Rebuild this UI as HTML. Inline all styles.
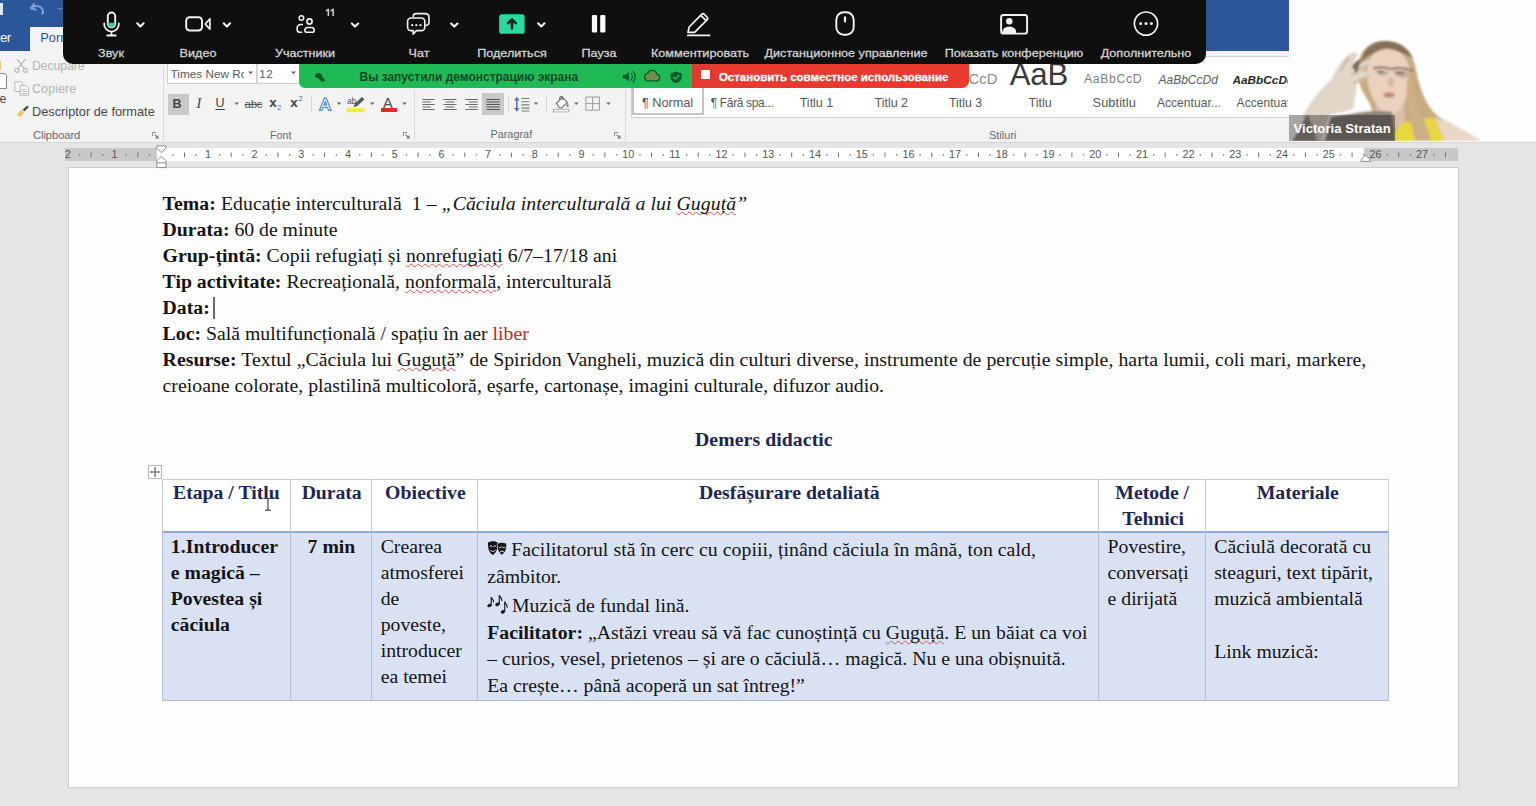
<!DOCTYPE html>
<html lang="ro">
<head>
<meta charset="utf-8">
<title>Document Word – Zoom</title>
<style>
*{box-sizing:border-box;margin:0;padding:0}
html,body{width:1536px;height:806px;overflow:hidden;background:#e5e4e6}
body{position:relative;font-family:"Liberation Sans","DejaVu Sans",sans-serif;color:#444}
.abs{position:absolute}
svg{position:absolute;overflow:visible}
/* ---------- Word chrome ---------- */
#titlebar{left:0;top:0;width:1289px;height:51px;background:#2a569a}
#tab-home{left:30px;top:27px;width:60px;height:24px;background:#f3f3f3;color:#2b579a;font-size:13px;line-height:24px;padding-left:10px}
#tab-prev{left:0;top:27px;width:30px;height:24px;color:#fff;font-size:13px;line-height:24px}
#ribbon{left:0;top:51px;width:1536px;height:92px;background:#f3f3f3;border-bottom:1px solid #d6d6d6}
#rulerbar{left:0;top:143px;width:1536px;height:25px;background:#e5e4e6}
.rb{position:absolute;font-size:12.5px;color:#444;white-space:nowrap;line-height:16px}
.grp{position:absolute;font-size:11.5px;color:#666;white-space:nowrap;line-height:14px}
.sep{position:absolute;width:1px;background:#dadada}
.rt2{position:absolute;white-space:nowrap;line-height:20px;height:20px}
/* ---------- Page ---------- */
#page{left:68px;top:167px;width:1390.500px;height:620.500px;background:#fefdfe;border:1px solid #cdcdcd}
.t{position:absolute;white-space:nowrap;font-family:"Liberation Serif","DejaVu Serif",serif;font-size:19.75px;line-height:26px;height:26px;color:#141414}
.t b{font-weight:bold}
.sq{text-decoration:underline wavy #d9534f;text-decoration-thickness:1px;text-underline-offset:1px;text-decoration-skip-ink:none}
.nv{color:#1d2654}
.red{color:#c0271e}
/* table */
.cell{position:absolute;border:1px solid #b9c5e3}
.vl{top:479px;width:1px;height:221.500px;background:linear-gradient(#c4c9dc 0,#c4c9dc 52px,#b3c0e2 52px,#b3c0e2 100%)}
/* ---------- Zoom toolbar ---------- */
#ztb{left:63px;top:0;width:1143px;height:64px;background:#0f0f0f;border-radius:0 0 10px 10px}
.zl{position:absolute;top:45.400px;font-size:11.400px;line-height:16px;color:#d2d2d2;white-space:nowrap;transform:translateX(-50%) scaleX(1.105);-webkit-text-stroke:.3px #d2d2d2}
.zn{position:absolute;font-size:46px;line-height:48px;height:48px;color:#dcdcdc;white-space:nowrap;letter-spacing:-3px;transform:scale(.25);transform-origin:0 0;-webkit-text-stroke:1.400px #dcdcdc}
#gbar{left:298.500px;top:64px;width:395px;height:24.300px;background:#1fba56;border-radius:0 0 0 6px}
#rbar{left:692px;top:64px;width:276.500px;height:23.500px;background:#e8392e;border-radius:0 0 7px 0}
.gt{position:absolute;font-size:11.960px;font-weight:bold;line-height:16px;color:#0c4a24;white-space:nowrap}
.rt{position:absolute;font-size:11.490px;font-weight:bold;line-height:16px;color:#fff;white-space:nowrap;-webkit-text-stroke:.3px #fff}
/* ---------- Webcam ---------- */
#cam{left:1289px;top:0;width:247px;height:140.500px;background:#fefefe;overflow:hidden}
</style>
</head>
<body>
<div id="titlebar" class="abs"></div>
<div id="tab-home" class="abs"></div>
<div id="ribbon" class="abs"></div>
<!-- undo arrow + quick access remnants on title bar -->
<svg style="left:0;top:0" width="70" height="26" viewBox="0 0 70 26"><path d="M34 4l-3.200 4.200 5 1.600M31.200 8c3-2.600 8-2.800 10.600.4 1.600 2 1.600 4 .6 5.600" fill="none" stroke="#7f9fd6" stroke-width="2" stroke-linecap="round" stroke-linejoin="round"/><path d="M57.600 8.700h6" stroke="#5a7fc0" stroke-width="1.600"/><rect x="0" y="3" width="3" height="12" fill="#dfe7f5"/></svg>
<!-- paste icon remnants -->
<div class="abs" style="left:0;top:61px;width:1.200px;height:9px;background:#efc27a"></div>
<div class="abs" style="left:-6px;top:73px;width:13px;height:15.500px;background:#fff;border:1px solid #8a8a8a;border-radius:0 3px 0 0"></div>
<!-- clipboard icons -->
<svg style="left:14px;top:57px" width="16" height="62" viewBox="14 57 16 62" fill="none" stroke-linecap="round" stroke-linejoin="round">
<g stroke="#b9b9b9" stroke-width="1.200"><path d="M17.200 59.400l7.200 9.200M25.200 59.400l-7.200 9.200"/><circle cx="17" cy="70.300" r="2"/><circle cx="25.400" cy="70.300" r="2"/></g>
<g stroke="#b9b9b9" stroke-width="1" fill="#f7f7f7"><path d="M15.200 81.800h5.600l2 2v7.600h-7.600z"/><path d="M20.400 85.400h5.800l2.400 2.400v7.400h-8.200z"/><path d="M22 89.500h4.600M22 91.500h4.600M22 93.500h4.600" stroke-width=".8"/></g>
<path d="M22.600 109.800l4.600-4.200 1.600 1.600-4.400 4.400z" fill="#4a4a4a"/>
<path d="M17 114.200c1.600-.6 2.600-2.600 4.400-4.400l3 3c-1.800 1.800-3.400 3.600-5 4.800z" fill="#f0c75e"/>
</svg>
<!-- group separators -->
<div class="sep" style="left:163px;top:66px;height:75px"></div>
<div class="sep" style="left:413.500px;top:90px;height:51px"></div>
<div class="sep" style="left:625px;top:90px;height:51px"></div>
<!-- dialog launchers -->
<svg style="left:152px;top:132px" width="7" height="6" viewBox="0 0 7 6"><path d="M.5 4V.5H4" fill="none" stroke="#8a8a8a"/><path d="M2.600 2.600L6 6V3.400M6 6H3.400" fill="none" stroke="#777" stroke-width="1.100"/></svg>
<svg style="left:402.500px;top:132px" width="7" height="6" viewBox="0 0 7 6"><path d="M.5 4V.5H4" fill="none" stroke="#8a8a8a"/><path d="M2.600 2.600L6 6V3.400M6 6H3.400" fill="none" stroke="#777" stroke-width="1.100"/></svg>
<svg style="left:614px;top:132px" width="7" height="6" viewBox="0 0 7 6"><path d="M.5 4V.5H4" fill="none" stroke="#8a8a8a"/><path d="M2.600 2.600L6 6V3.400M6 6H3.400" fill="none" stroke="#777" stroke-width="1.100"/></svg>
<!-- font name / size boxes -->
<div class="abs" style="left:167px;top:60px;width:89.500px;height:24px;background:#fff;border:1px solid #cfcfcf"></div>
<div class="abs" style="left:256.500px;top:60px;width:44px;height:24px;background:#fff;border:1px solid #cfcfcf;border-left:1px solid #dcdcdc"></div>
<svg style="left:248px;top:71px" width="50" height="4" viewBox="248 71 50 4"><path d="M248.200 71.400h5l-2.500 2.800zM291 71.400h5l-2.500 2.800z" fill="#666"/></svg>
<!-- B highlighted, justify highlighted -->
<div class="abs" style="left:167.500px;top:93.500px;width:21.300px;height:21.600px;background:#c9c9c9"></div>
<div class="abs" style="left:482.400px;top:93.200px;width:21.200px;height:22px;background:#c9c9c9"></div>
<div class="sep" style="left:310.500px;top:95.500px;height:16px;background:#d4d4d4"></div>
<div class="sep" style="left:507.500px;top:95.500px;height:16px;background:#d4d4d4"></div>
<div class="sep" style="left:546.300px;top:95.500px;height:16px;background:#d4d4d4"></div>
<div id="rulerbar" class="abs"></div>
<div id="page" class="abs"></div>
<!-- dropdown arrows row 2 -->
<svg style="left:230px;top:100px" width="390" height="8" viewBox="230 100 390 8"><g fill="#6a6a6a"><path d="M234.400 102.400h4.600l-2.300 2.600z"/><path d="M336.800 102.400h4.600l-2.300 2.600z"/><path d="M370 102.400h4.600l-2.300 2.600z"/><path d="M402.200 102.400h4.600l-2.300 2.600z"/><path d="M533.800 102.400h4.600l-2.300 2.600z"/><path d="M574 102.400h4.600l-2.300 2.600z"/><path d="M606.200 102.400h4.600l-2.300 2.600z"/></g></svg>
<!-- text effects A -->
<svg style="left:317px;top:96px" width="17" height="17" viewBox="317 96 17 17"><path d="M319.400 110.400l5-12.400h1.800l5 12.400h-2.600l-1.100-3h-4.500l-1.100 3zM324 105.200h2.600l-1.300-3.800z" fill="#f4f8ff" stroke="#5b8fd6" stroke-width="1.300" stroke-linejoin="round"/></svg>
<!-- highlighter -->
<svg style="left:345px;top:94px" width="22" height="20" viewBox="345 94 22 20"><rect x="346.200" y="108.200" width="18.600" height="4" rx="1.600" fill="#f2ee3a"/><path d="M353.400 107.200l1.400-3.600 7.200-6.600 2.400 2.400-7.200 6.600z" fill="#5a5a5a"/></svg>
<div class="rt2" style="left:347px;top:90.500px;font-size:8.500px;color:#555;letter-spacing:-.2px">ab</div>
<!-- font colour -->
<div class="rt2" style="left:383px;top:92.500px;font-size:14.500px;color:#4a4a4a">A</div>
<div class="abs" style="left:381px;top:108.200px;width:16px;height:4px;background:#e02a2a"></div>
<!-- align icons -->
<svg style="left:420px;top:96px" width="200" height="18" viewBox="420 96 200 18" fill="none" stroke="#6a6a6a" stroke-width="1.100">
<path d="M422.400 99.500h12.200M422.400 102h8.600M422.400 104.500h12.200M422.400 107h8.600M422.400 109.500h12.200"/>
<path d="M443.400 99.500h13.200M445.600 102h8.800M443.400 104.500h13.200M445.600 107h8.800M443.400 109.500h13.200"/>
<path d="M465.400 99.500h12.400M469 102h8.800M465.400 104.500h12.400M469 107h8.800M465.400 109.500h12.400"/>
<path d="M486.400 99.500h13.400M486.400 102h13.400M486.400 104.500h13.400M486.400 107h13.400M486.400 109.500h13.400" stroke="#555"/>
<!-- line spacing -->
<path d="M521.400 98.500h8M521.400 101.700h8M521.400 104.900h8M521.400 108.100h8M521.400 111h8" stroke="#7a7a7a"/>
<path d="M516.800 98v12.400" stroke="#4a6fb3" stroke-width="1.500"/><path d="M514 100.400l2.800-3.600 2.800 3.600zM514 108l2.800 3.600 2.800-3.600z" fill="#4a6fb3" stroke="none"/>
<!-- shading bucket -->
<path d="M556.400 103.400l6-6 5 5-5.600 5.400h-2.400z" fill="#fbfbfb" stroke="#666"/><path d="M560 99.800c-1-2.200.4-3.800 1.800-3.200 1.200.6 1.200 2 .8 3.200" stroke="#666"/><path d="M567.800 103.600c.8 1.400 1.200 2.200.6 3-.6.600-1.600.4-1.800-.6-.1-.8.500-1.500 1.200-2.400z" fill="#777" stroke="none"/>
<rect x="553.400" y="109.300" width="15.400" height="2.600" fill="#fff" stroke="#9a9a9a" stroke-width=".8"/>
<!-- borders -->
<path d="M585.800 97h13.600v13.200h-13.600zM592.600 97v13.200M585.800 103.600h13.600" stroke="#9a9a9a" stroke-width="1"/>
</svg>
<!-- styles gallery -->
<div class="abs" style="left:631px;top:56px;width:658px;height:61.500px;background:#fff;border-left:1px solid #d0d0d0;border-top:1px solid #d2d2d2;border-bottom:1px solid #cfcfcf"></div>
<div class="abs" style="left:632px;top:86px;width:72.400px;height:28.600px;border:2px solid #c4c4c4"></div>
<div id="ruler" class="abs" style="left:0;top:0">
<div class="abs" style="left:64.800px;top:148px;width:1393.600px;height:13px;background:#fff"></div>
<div class="abs" style="left:64.800px;top:148px;width:92.400px;height:13px;background:#c8c8c8"></div>
<div class="abs" style="left:1364.400px;top:148px;width:94px;height:13px;background:#c8c8c8"></div>
<svg style="left:0;top:143px" width="1536" height="26" viewBox="0 143 1536 26">
<path d="M91.1 152.500v4.600M137.8 152.500v4.600M184.5 152.500v4.600M231.2 152.500v4.600M277.9 152.500v4.600M324.6 152.500v4.600M371.4 152.500v4.600M418.1 152.500v4.600M464.8 152.500v4.600M511.4 152.500v4.600M558.2 152.500v4.600M604.9 152.500v4.600M651.5 152.500v4.600M698.2 152.500v4.600M745.0 152.500v4.600M791.7 152.500v4.600M838.4 152.500v4.600M885.0 152.500v4.600M931.8 152.500v4.600M978.5 152.500v4.600M1025.2 152.500v4.600M1071.9 152.500v4.600M1118.5 152.500v4.600M1165.2 152.500v4.600M1212.0 152.500v4.600M1258.7 152.500v4.600M1305.4 152.500v4.600M1352.1 152.500v4.600M1398.8 152.500v4.600M1445.5 152.500v4.600" stroke="#6f6f6f" stroke-width="1" fill="none"/>
<g fill="#6a6a6a"><rect x="78.9" y="154.200" width="1.300" height="1.300"/><rect x="102.2" y="154.200" width="1.300" height="1.300"/><rect x="125.6" y="154.200" width="1.300" height="1.300"/><rect x="148.9" y="154.200" width="1.300" height="1.300"/><rect x="172.3" y="154.200" width="1.300" height="1.300"/><rect x="195.6" y="154.200" width="1.300" height="1.300"/><rect x="219.0" y="154.200" width="1.300" height="1.300"/><rect x="242.3" y="154.200" width="1.300" height="1.300"/><rect x="265.7" y="154.200" width="1.300" height="1.300"/><rect x="289.0" y="154.200" width="1.300" height="1.300"/><rect x="312.4" y="154.200" width="1.300" height="1.300"/><rect x="335.7" y="154.200" width="1.300" height="1.300"/><rect x="359.1" y="154.200" width="1.300" height="1.300"/><rect x="382.4" y="154.200" width="1.300" height="1.300"/><rect x="405.8" y="154.200" width="1.300" height="1.300"/><rect x="429.1" y="154.200" width="1.300" height="1.300"/><rect x="452.5" y="154.200" width="1.300" height="1.300"/><rect x="475.8" y="154.200" width="1.300" height="1.300"/><rect x="499.2" y="154.200" width="1.300" height="1.300"/><rect x="522.5" y="154.200" width="1.300" height="1.300"/><rect x="545.9" y="154.200" width="1.300" height="1.300"/><rect x="569.2" y="154.200" width="1.300" height="1.300"/><rect x="592.6" y="154.200" width="1.300" height="1.300"/><rect x="615.9" y="154.200" width="1.300" height="1.300"/><rect x="639.3" y="154.200" width="1.300" height="1.300"/><rect x="662.6" y="154.200" width="1.300" height="1.300"/><rect x="686.0" y="154.200" width="1.300" height="1.300"/><rect x="709.3" y="154.200" width="1.300" height="1.300"/><rect x="732.7" y="154.200" width="1.300" height="1.300"/><rect x="756.0" y="154.200" width="1.300" height="1.300"/><rect x="779.4" y="154.200" width="1.300" height="1.300"/><rect x="802.7" y="154.200" width="1.300" height="1.300"/><rect x="826.1" y="154.200" width="1.300" height="1.300"/><rect x="849.4" y="154.200" width="1.300" height="1.300"/><rect x="872.8" y="154.200" width="1.300" height="1.300"/><rect x="896.1" y="154.200" width="1.300" height="1.300"/><rect x="919.5" y="154.200" width="1.300" height="1.300"/><rect x="942.8" y="154.200" width="1.300" height="1.300"/><rect x="966.2" y="154.200" width="1.300" height="1.300"/><rect x="989.5" y="154.200" width="1.300" height="1.300"/><rect x="1012.9" y="154.200" width="1.300" height="1.300"/><rect x="1036.2" y="154.200" width="1.300" height="1.300"/><rect x="1059.6" y="154.200" width="1.300" height="1.300"/><rect x="1082.9" y="154.200" width="1.300" height="1.300"/><rect x="1106.3" y="154.200" width="1.300" height="1.300"/><rect x="1129.6" y="154.200" width="1.300" height="1.300"/><rect x="1153.0" y="154.200" width="1.300" height="1.300"/><rect x="1176.3" y="154.200" width="1.300" height="1.300"/><rect x="1199.7" y="154.200" width="1.300" height="1.300"/><rect x="1223.0" y="154.200" width="1.300" height="1.300"/><rect x="1246.4" y="154.200" width="1.300" height="1.300"/><rect x="1269.7" y="154.200" width="1.300" height="1.300"/><rect x="1293.1" y="154.200" width="1.300" height="1.300"/><rect x="1316.4" y="154.200" width="1.300" height="1.300"/><rect x="1339.8" y="154.200" width="1.300" height="1.300"/><rect x="1363.1" y="154.200" width="1.300" height="1.300"/><rect x="1386.5" y="154.200" width="1.300" height="1.300"/><rect x="1409.8" y="154.200" width="1.300" height="1.300"/><rect x="1433.2" y="154.200" width="1.300" height="1.300"/></g>
<g font-family="Liberation Sans, DejaVu Sans, sans-serif" font-size="10.800" fill="#555" text-anchor="middle">
<text x="67.8" y="158.400">2</text>
<text x="114.5" y="158.400">1</text>
<text x="207.9" y="158.400">1</text>
<text x="254.6" y="158.400">2</text>
<text x="301.3" y="158.400">3</text>
<text x="348.0" y="158.400">4</text>
<text x="394.7" y="158.400">5</text>
<text x="441.4" y="158.400">6</text>
<text x="488.1" y="158.400">7</text>
<text x="534.8" y="158.400">8</text>
<text x="581.5" y="158.400">9</text>
<text x="628.2" y="158.400">10</text>
<text x="674.9" y="158.400">11</text>
<text x="721.6" y="158.400">12</text>
<text x="768.3" y="158.400">13</text>
<text x="815.0" y="158.400">14</text>
<text x="861.7" y="158.400">15</text>
<text x="908.4" y="158.400">16</text>
<text x="955.1" y="158.400">17</text>
<text x="1001.8" y="158.400">18</text>
<text x="1048.5" y="158.400">19</text>
<text x="1095.2" y="158.400">20</text>
<text x="1141.9" y="158.400">21</text>
<text x="1188.6" y="158.400">22</text>
<text x="1235.3" y="158.400">23</text>
<text x="1282.0" y="158.400">24</text>
<text x="1328.7" y="158.400">25</text>
<text x="1375.4" y="158.400">26</text>
<text x="1422.1" y="158.400">27</text>
</g>
<path d="M156.800 145.800h9.200v2.200l-4.600 4.600-4.600-4.600z" fill="#fdfdfd" stroke="#8a8a8a" stroke-width="1"/>
<path d="M156.800 167.600v-6.800l4.600-4.600 4.600 4.600v6.800zM156.800 162.800h9.200" fill="#fdfdfd" stroke="#8a8a8a" stroke-width="1"/>
<path d="M1361 161.400v-1.600l4.600-4.600 4.600 4.600v1.600z" fill="#fdfdfd" stroke="#8a8a8a" stroke-width="1"/>
</svg>
</div>
<div id="rtxt" class="abs" style="left:0;top:0">
<div class="rt2" style="left:32.0px;top:55.7px;font-size:12.42px;color:#b4b4b4;letter-spacing:-0.16px;">Decupare</div>
<div class="rt2" style="left:32.0px;top:78.7px;font-size:12.5px;color:#b4b4b4;letter-spacing:0.08px;">Copiere</div>
<div class="rt2" style="left:32.0px;top:101.6px;font-size:12.78px;color:#484848;">Descriptor de formate</div>
<div class="rt2" style="left:33.0px;top:124.5px;font-size:11.26px;color:#6a6a6a;letter-spacing:-0.10px;">Clipboard</div>
<div class="rt2" style="left:170.5px;top:64.2px;font-size:11.8px;color:#5a5a5a;width:73.6px;overflow:hidden;">Times New Roman</div>
<div class="rt2" style="left:259.2px;top:64.3px;font-size:11.59px;color:#5a5a5a;letter-spacing:0.50px;">12</div>
<div class="rt2" style="left:269.9px;top:124.5px;font-size:10.66px;color:#6a6a6a;letter-spacing:0.10px;">Font</div>
<div class="rt2" style="left:490.4px;top:124.0px;font-size:10.9px;color:#6a6a6a;">Paragraf</div>
<div class="rt2" style="left:642.1px;top:93.2px;font-size:12.75px;color:#5a5a5a;letter-spacing:-0.07px;">¶ Normal</div>
<div class="rt2" style="left:710.7px;top:93.4px;font-size:12.1px;color:#5a5a5a;letter-spacing:-0.38px;">¶ Fără spa...</div>
<div class="rt2" style="left:799.7px;top:93.2px;font-size:12.58px;color:#5a5a5a;letter-spacing:-0.03px;">Titlu 1</div>
<div class="rt2" style="left:874.5px;top:93.2px;font-size:12.58px;color:#5a5a5a;letter-spacing:-0.03px;">Titlu 2</div>
<div class="rt2" style="left:949.0px;top:93.3px;font-size:12.34px;color:#5a5a5a;letter-spacing:-0.02px;">Titlu 3</div>
<div class="rt2" style="left:1028.6px;top:93.2px;font-size:12.62px;color:#5a5a5a;letter-spacing:-0.05px;">Titlu</div>
<div class="rt2" style="left:1092.5px;top:93.2px;font-size:12.83px;color:#5a5a5a;letter-spacing:0.07px;">Subtitlu</div>
<div class="rt2" style="left:1156.9px;top:93.4px;font-size:12.1px;color:#5a5a5a;letter-spacing:0.01px;">Accentuar...</div>
<div class="rt2" style="left:1236.6px;top:93.4px;font-size:12.1px;color:#5a5a5a;width:51.6px;overflow:hidden;">Accentuat...</div>
<div class="rt2" style="left:988.9px;top:124.6px;font-size:11.0px;color:#6a6a6a;letter-spacing:0.02px;">Stiluri</div>
<div class="rt2" style="left:968.4px;top:69.1px;font-size:14.79px;color:#8a8a8a;letter-spacing:0.15px;">CcD</div>
<div class="rt2" style="left:1009.7px;top:65.2px;font-size:31.19px;color:#3a3a3a;letter-spacing:-0.20px;">AaB</div>
<div class="rt2" style="left:1084.0px;top:69.4px;font-size:12.3px;color:#808080;letter-spacing:0.60px;">AaBbCcD</div>
<div class="rt2" style="left:1158.5px;top:69.5px;font-size:12.02px;color:#606060;letter-spacing:-0.01px;font-style:italic">AaBbCcDd</div>
<div class="rt2" style="left:1232.5px;top:69.6px;font-size:11.8px;color:#2a2a2a;width:55.6px;overflow:hidden;font-style:italic;font-weight:bold">AaBbCcDd</div>
<div class="rt2" style="left:0.0px;top:28.2px;font-size:13.2px;color:#ffffff;letter-spacing:-0.60px;">er</div>
<div class="rt2" style="left:40.3px;top:28.4px;font-size:12.8px;color:#2b579a;">Pornire</div>
<div class="rt2" style="left:-0.5px;top:88.8px;font-size:12.2px;color:#484848;letter-spacing:-0.20px;">e</div>
<div class="rt2" style="left:172.5px;top:93.9px;font-size:12.5px;color:#444;letter-spacing:-0.30px;font-weight:bold">B</div>
<div class="rt2" style="left:196.4px;top:93.3px;font-size:14.5px;color:#444;letter-spacing:0.60px;font-style:italic;font-family:'Liberation Serif',serif">I</div>
<div class="rt2" style="left:215.4px;top:93.1px;font-size:12.5px;color:#444;letter-spacing:0.60px;text-decoration:underline;text-underline-offset:1.5px">U</div>
<div class="rt2" style="left:244.6px;top:93.8px;font-size:11.5px;color:#555;letter-spacing:-0.35px;text-decoration:line-through">abc</div>
<div class="rt2" style="left:269.2px;top:93.3px;font-size:13.5px;color:#444;font-weight:bold">x</div>
<div class="rt2" style="left:290.3px;top:93.3px;font-size:13.5px;color:#444;letter-spacing:0.20px;font-weight:bold">x</div>
<div class="rt2" style="left:277.0px;top:97.9px;font-size:7.5px;color:#4d6ea8;">2</div>
<div class="rt2" style="left:298.4px;top:89.4px;font-size:7.5px;color:#4d6ea8;letter-spacing:0.10px;">2</div>
</div>
<div id="tbl" class="abs" style="left:0;top:0">
<!-- header row bg + body row bg -->
<div class="abs" style="left:162px;top:479px;width:1227px;height:53px;background:#fff"></div>
<div class="abs" style="left:162px;top:532px;width:1227px;height:168.5px;background:#d9e2f3"></div>
<!-- outer + inner borders -->
<div class="abs" style="left:162px;top:479px;width:1227px;height:1px;background:#c2c8dd"></div>
<div class="abs" style="left:162px;top:699.8px;width:1227px;height:1px;background:#a9b9de"></div>
<div class="abs" style="left:162px;top:531px;width:1227px;height:2px;background:#8ea9db"></div>
<div class="abs vl" style="left:161.8px"></div>
<div class="abs vl" style="left:289.7px"></div>
<div class="abs vl" style="left:371.3px"></div>
<div class="abs vl" style="left:476.8px"></div>
<div class="abs vl" style="left:1098.1px"></div>
<div class="abs vl" style="left:1204.6px"></div>
<div class="abs vl" style="left:1388px"></div>
<!-- table move handle -->
<div class="abs" style="left:147.5px;top:464.5px;width:14px;height:14px;background:#fff;border:1px solid #b5b5b5"></div>
<svg style="left:149.5px;top:466.5px" width="10" height="10" viewBox="0 0 10 10"><path d="M5 .8V9.2M.8 5H9.2" stroke="#555" stroke-width="1" fill="none"/><path d="M5 0L6.3 1.6H3.7ZM5 10L6.3 8.4H3.7ZM0 5L1.6 3.7V6.3ZM10 5L8.4 3.7V6.3Z" fill="#555"/></svg>
</div>
<div id="doc" class="abs" style="left:0;top:0;width:1536px;height:806px">
<div class="t" style="left:162.6px;top:189.9px;letter-spacing:0.064px"><b>Tema:</b> Educație interculturală&nbsp; 1 – <i>„Căciula interculturală a lui <span class="sq">Guguță</span>”</i></div>
<div class="t" style="left:162.6px;top:215.9px;letter-spacing:-0.009px"><b>Durata:</b> 60 de minute</div>
<div class="t" style="left:162.6px;top:241.9px;letter-spacing:0.028px"><b>Grup-țintă:</b> Copii refugiați și <span class="sq">nonrefugiați</span> 6/7–17/18 ani</div>
<div class="t" style="left:162.6px;top:267.9px;letter-spacing:0.012px"><b>Tip activitate:</b> Recreațională, <span class="sq">nonformală</span>, interculturală</div>
<div class="t" style="left:162.6px;top:293.9px;letter-spacing:-0.009px"><b>Data:</b></div>
<div class="t" style="left:162.6px;top:320.1px;letter-spacing:0.008px"><b>Loc:</b> Sală multifuncțională / spațiu în aer <span class="red">liber</span></div>
<div class="t" style="left:162.6px;top:346.1px;letter-spacing:0.053px"><b>Resurse:</b> Textul „Căciula lui <span class="sq">Guguță</span>” de Spiridon Vangheli, muzică din culturi diverse, instrumente de percuție simple, harta lumii, coli mari, markere,</div>
<div class="t" style="left:162.6px;top:372.1px;letter-spacing:0.015px">creioane colorate, plastilină multicoloră, eșarfe, cartonașe, imagini culturale, difuzor audio.</div>
<div class="t nv" style="left:695.0px;top:425.8px;letter-spacing:0.076px"><b>Demers didactic</b></div>
<div class="t nv" style="left:173.0px;top:479.0px;letter-spacing:-0.009px"><b>Etapa / Titlu</b></div>
<div class="t nv" style="left:301.7px;top:479.0px;letter-spacing:-0.089px"><b>Durata</b></div>
<div class="t nv" style="left:385.1px;top:479.0px;letter-spacing:0.078px"><b>Obiective</b></div>
<div class="t nv" style="left:699.0px;top:479.0px;letter-spacing:0.026px"><b>Desfășurare detaliată</b></div>
<div class="t nv" style="left:1115.3px;top:479.0px;letter-spacing:-0.038px"><b>Metode /</b></div>
<div class="t nv" style="left:1122.3px;top:504.7px;letter-spacing:-0.009px"><b>Tehnici</b></div>
<div class="t nv" style="left:1256.7px;top:479.0px;letter-spacing:-0.009px"><b>Materiale</b></div>
<div class="t" style="left:170.8px;top:532.7px;letter-spacing:0.054px"><b>1.Introducer</b></div>
<div class="t" style="left:170.8px;top:558.7px;letter-spacing:-0.009px"><b>e magică –</b></div>
<div class="t" style="left:170.8px;top:584.7px;letter-spacing:-0.009px"><b>Povestea și</b></div>
<div class="t" style="left:170.8px;top:610.7px;letter-spacing:-0.009px"><b>căciula</b></div>
<div class="t" style="left:307.6px;top:532.7px;letter-spacing:-0.009px"><b>7 min</b></div>
<div class="t" style="left:380.7px;top:532.7px;letter-spacing:-0.009px">Crearea</div>
<div class="t" style="left:380.7px;top:558.7px;letter-spacing:-0.009px">atmosferei</div>
<div class="t" style="left:380.7px;top:584.7px;letter-spacing:-0.009px">de</div>
<div class="t" style="left:380.7px;top:610.7px;letter-spacing:-0.009px">poveste,</div>
<div class="t" style="left:380.7px;top:636.7px;letter-spacing:-0.009px">introducer</div>
<div class="t" style="left:380.7px;top:662.7px;letter-spacing:-0.009px">ea temei</div>
<div class="t" style="left:511.2px;top:535.7px;letter-spacing:0.053px">Facilitatorul stă în cerc cu copiii, ținând căciula în mână, ton cald,</div>
<div class="t" style="left:487.2px;top:562.8px;letter-spacing:-0.009px">zâmbitor.</div>
<div class="t" style="left:512.0px;top:591.5px;letter-spacing:-0.009px">Muzică de fundal lină.</div>
<div class="t" style="left:487.2px;top:619.3px;letter-spacing:0.032px"><b>Facilitator:</b> „Astăzi vreau să vă fac cunoștință cu <span class="sq">Guguță</span>. E un băiat ca voi</div>
<div class="t" style="left:487.2px;top:644.9px;letter-spacing:-0.001px">– curios, vesel, prietenos – și are o căciulă… magică. Nu e una obișnuită.</div>
<div class="t" style="left:487.2px;top:671.7px;letter-spacing:-0.009px">Ea crește… până acoperă un sat întreg!”</div>
<div class="t" style="left:1107.6px;top:532.8px;letter-spacing:-0.009px">Povestire,</div>
<div class="t" style="left:1107.6px;top:558.6px;letter-spacing:-0.009px">conversați</div>
<div class="t" style="left:1107.6px;top:584.5px;letter-spacing:-0.009px">e dirijată</div>
<div class="t" style="left:1214.2px;top:532.8px;letter-spacing:0.074px">Căciulă decorată cu</div>
<div class="t" style="left:1214.2px;top:558.6px;letter-spacing:-0.009px">steaguri, text tipărit,</div>
<div class="t" style="left:1214.2px;top:584.5px;letter-spacing:-0.009px">muzică ambientală</div>
<div class="t" style="left:1214.2px;top:637.9px;letter-spacing:-0.009px">Link muzică:</div>
</div>
<!-- monochrome emoji glyphs (theatre masks, musical notes) drawn as icons -->
<svg style="left:487px;top:540px" width="21" height="16" viewBox="487 540 21 16">
<path d="M488 542.600c3-1.800 6.800-1.800 9.600 0 .4 5.800-1.200 10.400-4.800 12.400-3.600-2-5.200-6.600-4.800-12.400z" fill="#151515"/>
<path d="M497.300 543.600c2.800-1.600 6.400-1.600 9.200 0 .4 5.400-1.200 9.600-4.600 11.400-3.400-1.800-5-6-4.600-11.400z" fill="#151515" stroke="#d9e2f3" stroke-width=".6"/>
<g fill="none" stroke="#e8eefa" stroke-width="1" stroke-linecap="round"><path d="M489.800 546.400c.8-.8 1.600-.8 2.400 0M493.600 546.400c.8-.8 1.600-.8 2.400 0M490.400 550.200c1.600 1.800 3.400 1.800 5 0"/><path d="M499 547.200c.8.600 1.600.6 2.400 0M502.600 547.200c.8.600 1.600.6 2.400 0M499.800 552.200c1.400-1.600 2.800-1.600 4.200 0"/></g>
</svg>
<svg style="left:487px;top:594px" width="22" height="20" viewBox="487 594 22 20">
<g fill="#151515"><ellipse cx="489.400" cy="605.600" rx="2.100" ry="1.600" transform="rotate(-20 489.400 605.600)"/><ellipse cx="497.400" cy="604.400" rx="2.200" ry="1.700" transform="rotate(-20 497.400 604.400)"/><ellipse cx="502.800" cy="611.800" rx="2.200" ry="1.700" transform="rotate(-20 502.800 611.800)"/></g>
<g fill="none" stroke="#151515" stroke-width="1.100" stroke-linecap="round"><path d="M491.200 605.200v-8.200c.4 1.800 2.400 2.600 2.400 5"/><path d="M499.300 604v-9c.4 2 2.600 2.800 2.600 5.400"/><path d="M504.700 611.400v-9.800c.4 2 2.600 3 2.600 5.600"/></g>
</svg>
<!-- text caret after "Data:" and mouse I-beam -->
<div class="abs" style="left:213.300px;top:297px;width:1.600px;height:21.600px;background:#6a6a6a"></div>
<svg style="left:264px;top:497px" width="8" height="15" viewBox="264 497 8 15"><path d="M265 498.200c1.400 0 2.400.2 2.900.8.500-.6 1.500-.8 2.900-.8M265 510.400c1.400 0 2.400-.2 2.900-.8.500.6 1.500.8 2.900.8M267.900 499v10.600" fill="none" stroke="#3c3c3c" stroke-width="1.100"/></svg>
<div id="ztb" class="abs">
<svg style="left:0;top:0" width="1143" height="65" viewBox="63 0 1143 65" fill="none" stroke="#f2f2f2" stroke-width="1.7" stroke-linecap="round" stroke-linejoin="round">
<!-- mic -->
<path d="M107.800 23.600V16.200a3.700 3.700 0 0 1 7.400 0V23.600a3.700 3.700 0 0 1-7.400 0z" stroke-width="1.900"/>
<path d="M108.100 23.200h6.800v.5a3.400 3.400 0 0 1-6.800 0z" fill="#43cf97" stroke="#43cf97" stroke-width=".8"/>
<path d="M104.200 23.400v.9a7.300 7.300 0 0 0 14.600 0v-.9M111.500 31.600v3.800M107.200 35.500h8.600" stroke-width="1.800"/>
<path d="M137.200 23.300l3.200 3.100 3.200-3.100" stroke-width="2.100"/>
<!-- video -->
<rect x="186.200" y="17.300" width="15.800" height="13.200" rx="3.400" stroke-width="1.900"/>
<path d="M205.200 24l4.700-5.100v10.200z" stroke-width="1.700"/>
<path d="M223.700 23.300l3.200 3.100 3.200-3.100" stroke-width="2.100"/>
<!-- participants -->
<circle cx="301.400" cy="18" r="2.300" stroke-width="1.500"/>
<path d="M302.400 24.500h-1.800a3.400 3.400 0 0 0-3.400 3.400v1.800a2.500 2.500 0 0 0 2.500 2.500h2" stroke-width="1.600"/>
<circle cx="309.500" cy="21.500" r="2.600" stroke-width="1.600"/>
<path d="M307.600 27.500h3.900a2.800 2.800 0 0 1 2.800 2.800v0a2 2 0 0 1-2 2h-5.500a2 2 0 0 1-2-2v0a2.800 2.800 0 0 1 2.800-2.800z" stroke-width="1.600"/>
<path d="M351.800 23.500l3.200 3.100 3.200-3.100" stroke-width="2.100"/>
<!-- chat -->
<path d="M413.200 16.600v-.2a2.800 2.800 0 0 1 2.800-2.800h9.600a3.400 3.400 0 0 1 3.400 3.400v5.400a3 3 0 0 1-3 3h-.2" stroke-width="1.600"/>
<path d="M411 18h10.400a3.400 3.400 0 0 1 3.400 3.400v5.800a3.400 3.400 0 0 1-3.400 3.400h-5l-3.300 3.500.1-3.500h-2.200a3.400 3.400 0 0 1-3.400-3.400v-5.800a3.400 3.400 0 0 1 3.400-3.400z" stroke-width="1.600"/>
<g fill="#f2f2f2" stroke="none"><circle cx="412.200" cy="25.200" r="1.100"/><circle cx="416.300" cy="25.200" r="1.100"/><circle cx="420.400" cy="25.200" r="1.100"/></g>
<path d="M451.100 23.500l3.200 3.100 3.200-3.100" stroke-width="2.100"/>
<!-- share -->
<rect x="499.2" y="14.2" width="25.4" height="19.6" rx="2.6" fill="#27dba0" stroke="none"/>
<path d="M511.900 28.600v-8.600M508.100 23.200l3.800-3.800 3.800 3.800" stroke="#0c1a14" stroke-width="2.500"/>
<path d="M538.100 23.300l3.200 3.100 3.200-3.100" stroke-width="2.100"/>
<!-- pause -->
<g fill="#fafafa" stroke="none"><rect x="591.9" y="15" width="5.200" height="17.400" rx="1.2"/><rect x="600.2" y="15" width="5.200" height="17.400" rx="1.2"/></g>
<!-- pencil -->
<path d="M688 32.4l1.2-5.400 12.400-12.600a2 2 0 0 1 2.800 0l2.600 2.600a2 2 0 0 1 0 2.800l-12.400 12.600zM700.800 15.400l5.200 5.200M687.800 35.400h21.800"/>
<!-- mouse -->
<rect x="836.300" y="12.300" width="17.400" height="22.400" rx="7.400" stroke-width="1.900"/>
<path d="M845 17.400v4" stroke-width="2.200"/>
<!-- show conference -->
<rect x="1001.100" y="15" width="26" height="18.600" rx="2.400" stroke-width="1.900"/>
<circle cx="1009.300" cy="21.300" r="3.200" fill="#f2f2f2" stroke="none"/>
<path d="M1002.400 33.200v-1.400a6.900 5.400 0 0 1 13.800 0v1.400z" fill="#f2f2f2" stroke="none"/>
<!-- more -->
<circle cx="1146" cy="23.600" r="11.600"/>
<g fill="#f2f2f2" stroke="none"><circle cx="1140.600" cy="23.600" r="1.500"/><circle cx="1146" cy="23.600" r="1.500"/><circle cx="1151.400" cy="23.600" r="1.500"/></g>
</svg>
<div class="abs" style="left:261.600px;top:7.200px;width:12px;height:9.100px;overflow:hidden"><div class="zn" style="left:0;top:0">11</div></div>
<div class="zl" style="left:48px">Звук</div>
<div class="zl" style="left:135px">Видео</div>
<div class="zl" style="left:242.400px">Участники</div>
<div class="zl" style="left:356px">Чат</div>
<div class="zl" style="left:448.700px">Поделиться</div>
<div class="zl" style="left:535.800px">Пауза</div>
<div class="zl" style="left:636.600px">Комментировать</div>
<div class="zl" style="left:782.900px">Дистанционное управление</div>
<div class="zl" style="left:951.300px">Показать конференцию</div>
<div class="zl" style="left:1082.700px">Дополнительно</div>
</div>
<div id="gbar" class="abs">
<div class="gt" style="left:61px;top:5.200px">Вы запустили демонстрацию экрана</div>
<svg style="left:0;top:0" width="396" height="24" viewBox="298 64 396 24">
<!-- pin -->
<path d="M314 75c.8-1.800 3.400-2.600 5.400-1.600 1.600.9 2 2.400 1.800 3.600l3.200 3.200c-.8 1.300-2.700 1.800-4.200 1.100l-3.400-3.500c-1.600.3-3.100-.5-2.800-2.800z" fill="#0a5a22"/>
<!-- speaker -->
<path d="M621.800 75h2.600l3.600-3v9.600l-3.600-3h-2.600z" fill="#0d5a2a"/>
<path d="M630 73.600a4.400 4.400 0 0 1 0 6.400M632 71.600a7 7 0 0 1 0 10.400" fill="none" stroke="#0d5a2a" stroke-width="1.200" stroke-linecap="round"/>
<!-- cloud -->
<path d="M646.400 80.800h9a3.200 3.200 0 0 0 .4-6.400 4.600 4.600 0 0 0-8.800-1.200 3.900 3.900 0 0 0-.6 7.600z" fill="#6f8f48" stroke="#0d5a2a" stroke-width="1.300" stroke-linejoin="round"/>
<!-- shield -->
<path d="M675.100 71.400l5.600 2v4c0 3-2.400 4.900-5.600 5.800-3.200-.9-5.600-2.800-5.600-5.800v-4z" fill="#0d5a2a"/>
<path d="M672.600 77.200l1.900 1.900 3.400-3.600" fill="none" stroke="#1fba56" stroke-width="1.400" stroke-linecap="round" stroke-linejoin="round"/>
</svg>
</div>
<div id="rbar" class="abs">
<div class="abs" style="left:8.600px;top:6.100px;width:9px;height:9px;background:#fff;border-radius:1px"></div>
<div class="rt" style="left:26.900px;top:4.500px">Остановить совместное использование</div>
</div>
<div id="cam" class="abs">
<svg style="left:-1px;top:0" width="248" height="141" viewBox="0 0 248 141">
<defs><filter id="bl" x="-10%" y="-10%" width="120%" height="120%"><feGaussianBlur stdDeviation="1.300"/></filter></defs>
<rect width="248" height="141" fill="#fefefe"/>
<g filter="url(#bl)" transform="translate(-3 0)">
<!-- hair (back) -->
<path d="M73 78c-3-22 8-37 26-37 17 0 27 9 31 24 3 14 6 30 16 44 6 8 14 12 22 15l-6 17H86c2-14 4-22 0-34-3-9-11-16-13-29z" fill="#c7aa80"/>
<path d="M76 62c2-14 12-21 24-21 14 0 24 7 28 18-10-8-22-10-32-8-9 2-15 6-20 11z" fill="#86705a"/>
<!-- neck -->
<path d="M92 100h26l3 28H90z" fill="#dcbfa8"/>
<!-- face -->
<path d="M82 72c0-14 8-23 20-23 13 0 22 9 23 24 1 17-6 39-19 41-13 1-24-21-24-42z" fill="#ead2bf"/>
<!-- cheeks / shading -->
<ellipse cx="104" cy="95" rx="6" ry="2.800" fill="#c4857c"/>
<ellipse cx="106" cy="82" rx="3" ry="5" fill="#dcb8a2"/>
<!-- glasses & eyes -->
<path d="M88 68c7-1 13-1 18 1 7-2 15-1 22 2" fill="none" stroke="#6b564a" stroke-width="1.700"/>
<path d="M108 70c1 5 5 8 10 8 5-.5 8-3 9-7z" fill="#b9a79c" opacity=".8"/>
<path d="M90 70c1 4 4 6 8 6 4-.3 6-2 7-5z" fill="#b9a79c" opacity=".7"/>
<path d="M111 73h8M93 72h6" stroke="#5a463c" stroke-width="1.300"/>
<!-- arm + hand -->
<g transform="translate(-4 1)"><path d="M32 141c-3-9-7-18-10-26 6-12 16-26 28-36 5-10 9-19 17-25 3-3 8-4 10-1l-6 12c6-2 14-6 20-7 3 0 4 3 1 5l-12 7c5 0 9 1 10 3 1 3-6 5-14 9-1 8-2 18-4 26-8 3-16 4-24 6-3 9-5 18-8 27z" fill="#e2d6c8"/>
<path d="M70 74c4-3 12-8 18-10M72 82c5-2 12-5 16-7M60 70c2-5 5-10 8-13" stroke="#b89e8a" stroke-width="1.300" fill="none"/>
<path d="M71 66c2-5 6-8 10-7-3 5-4 10-5 14z" fill="#7d6a5c"/></g>
<!-- yellow top + shoulder -->
<path d="M116 124c10-4 24-6 34-6l10 23h-56z" fill="#e7d741"/>
<path d="M150 118c12 2 26 10 46 23h-36z" fill="#ead6c6"/>
<!-- hair front right lock -->
<path d="M124 66c3 16 5 34 12 48 3 8 8 14 10 27h-16c-2-14-6-24-8-38-1-12 0-26 2-37z" fill="#cdb086"/>
<!-- dark clothing bottom-left -->
<path d="M7.700 141l14.100-26 1.600 0 8.600 26z" fill="#989088"/>
<path d="M40 141l6-24c9-1 18-3 26-4 12-2 24-3 35-1l3 29z" fill="#8d857d"/>
</g>
</svg>
<div class="abs" style="left:0;top:115px;width:106px;height:26px;background:rgba(0,0,0,.350)"></div>
<div class="abs" style="left:4.400px;top:120.300px;font-size:13.100px;line-height:18px;font-weight:bold;color:#fff;white-space:nowrap;letter-spacing:.05px">Victoria Stratan</div>
</div>
</body>
</html>
